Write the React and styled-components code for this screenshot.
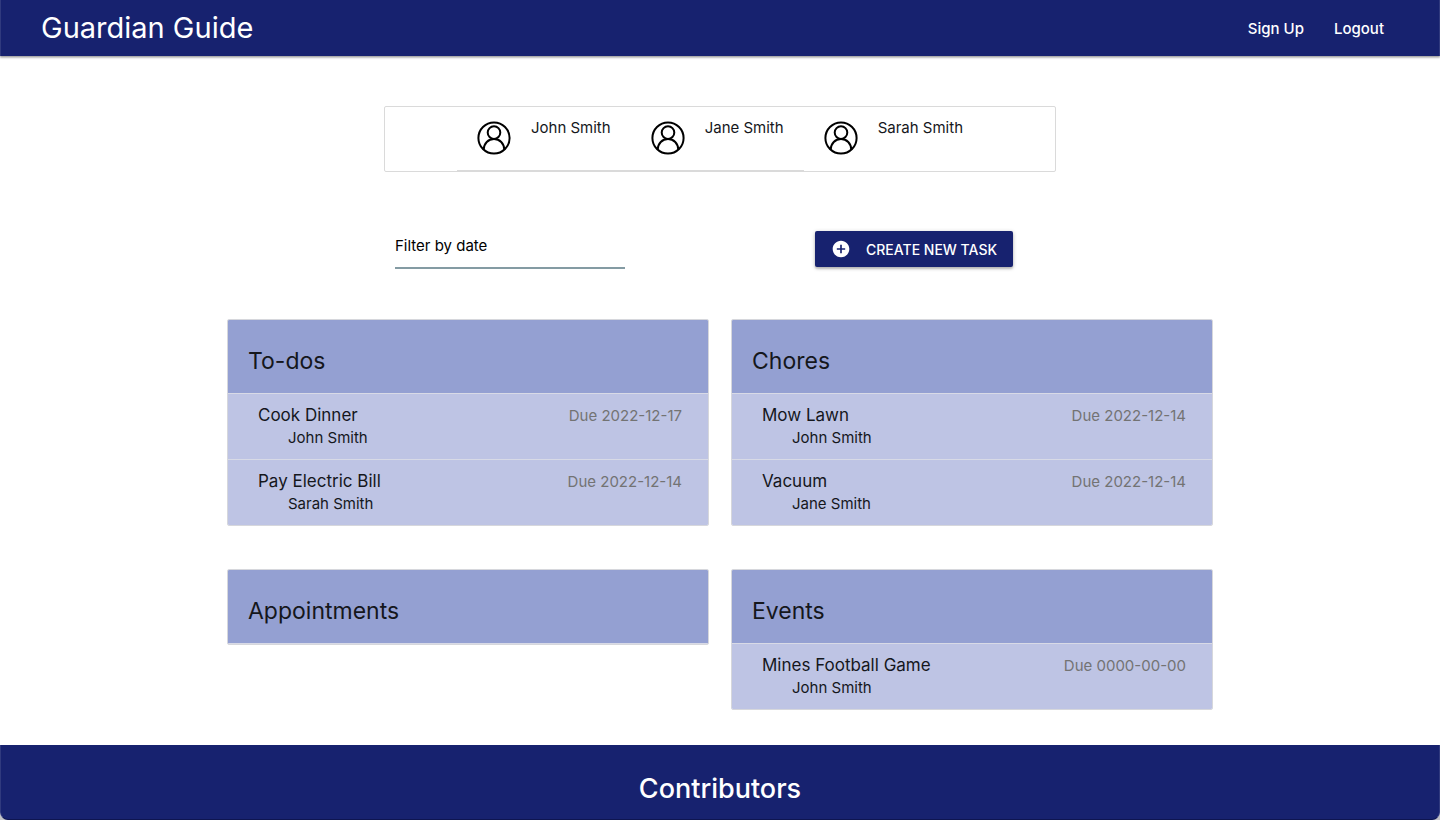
import React from "react";
import styled, { createGlobalStyle } from "styled-components";

const GlobalStyle = createGlobalStyle`
  *, *::before, *::after { box-sizing: border-box; }
  html { background: #c4c4c8; }
  body {
    margin: 0;
    font-family: Inter, "Liberation Sans", sans-serif;
    font-size: 15px;
    line-height: 22px;
    color: #15171c;
  }
  h1, h2, h3, p, ul { margin: 0; padding: 0; font-weight: 400; }
  ul { list-style: none; }
`;

const Page = styled.div`
  display: flex;
  flex-direction: column;
  min-height: 100vh;
  background: #fff;
  border-radius: 0 0 8px 8px;
`;

const NavBar = styled.header`
  display: flex;
  align-items: center;
  justify-content: space-between;
  height: 56px;
  padding: 0 40px;
  background: #17226f;
  border: solid #303a7e;
  border-width: 0 1px;
  box-shadow: 0 2px 2px rgba(0, 0, 0, 0.16), 0 1px 2px rgba(0, 0, 0, 0.3);
`;

const Brand = styled.a`
  font-size: 29px;
  line-height: 56px;
  color: #fff;
  text-decoration: none;
`;

const NavLinks = styled.nav`
  display: flex;
  padding-top: 2px;
`;

const NavLink = styled.a`
  padding: 0 15px;
  font-size: 15px;
  line-height: 54px;
  font-weight: 500;
  color: #fff;
  text-decoration: none;
`;

const Main = styled.main`
  flex: 1;
  width: 70%;
  margin: 0 auto;
  padding: 50px 0 35px;
`;

const People = styled.ul`
  display: flex;
  justify-content: center;
  width: 66.6667%;
  margin: 0 auto;
  border: 1px solid #dadada;
  border-radius: 2px;
`;

const Person = styled.li`
  display: flex;
  gap: 20px;
  height: 64px;
  padding: 10px 20px;
  border-bottom: 1px solid #dadada;

  &:last-child { border-bottom-color: transparent; }

  svg { margin-top: 4px; }
`;

const Toolbar = styled.div`
  display: grid;
  grid-template-columns: repeat(12, 1fr);
  margin-top: 52px;
  margin-bottom: 50px;
`;

const FilterField = styled.div`
  grid-column: 3 / span 3;
  padding: 0 11px;
`;

const FilterInput = styled.input`
  display: block;
  width: 100%;
  height: 45px;
  padding: 0;
  border: 0;
  border-bottom: 2px solid #849ba3;
  background: transparent;
  font: inherit;
  color: #000;
  outline: none;

  &::placeholder { color: #000; opacity: 1; }
`;

const CreateCell = styled.div`
  grid-column: 8 / span 4;
  padding: 7px 11px 0;
`;

const CreateButton = styled.button`
  display: flex;
  align-items: center;
  gap: 15px;
  height: 36px;
  padding: 0 16px;
  border: 0;
  border-radius: 2px;
  background: #17226f;
  color: #fff;
  font-family: inherit;
  font-size: 14px;
  font-weight: 500;
  text-transform: uppercase;
  white-space: nowrap;
  cursor: pointer;
  box-shadow: 0 2px 2px rgba(0, 0, 0, 0.16), 0 1px 4px rgba(0, 0, 0, 0.24);
`;

const Board = styled.div`
  display: grid;
  grid-template-columns: 1fr 1fr;
  align-items: start;
  gap: 43px 22px;
  padding: 0 11px;
`;

const Card = styled.section`
  border: 1px solid #d6d7dc;
  border-radius: 2px;
  overflow: hidden;
`;

const CardHeader = styled.div`
  height: 74px;
  padding: 24px 20px 0;
  background: #94a0d2;
  border-bottom: 1px solid #d8dae6;
`;

const CardTitle = styled.h2`
  font-size: 23px;
  line-height: 34px;
`;

const Task = styled.li`
  display: flex;
  justify-content: space-between;
  height: 66px;
  padding: 10px 26px 0 30px;
  background: #bec4e4;
  border-bottom: 1px solid #d8dae6;

  &:last-child { height: 65px; border-bottom: 0; }
`;

const TaskName = styled.h3`
  font-size: 17px;
  line-height: 22px;
`;

const Assignee = styled.p`
  padding-left: 30px;
  line-height: 24px;
`;

const DueDate = styled.span`
  line-height: 24px;
  color: #737373;
`;

const Footer = styled.footer`
  height: 75px;
  padding-top: 24px;
  background: #17226f;
  border: solid #303a7e;
  border-width: 0 1px;
  border-bottom: 1px solid #0e1550;
  border-radius: 0 0 8px 8px;
  text-align: center;
`;

const FooterTitle = styled.h2`
  font-size: 27px;
  line-height: 40px;
  font-weight: 500;
  color: #fff;
`;

const PersonIcon = () => (
  <svg width="34" height="34" viewBox="0 0 34 34" fill="none" stroke="#000" strokeWidth="2" aria-hidden="true">
    <circle cx="17" cy="17" r="15.6" />
    <circle cx="17" cy="11.6" r="6.3" />
    <path d="M6.7 28.6C6.9 22.5 11.2 18 17 18s10.1 4.500 10.300 10.600" />
  </svg>
);

const AddIcon = () => (
  <svg width="20" height="20" viewBox="0 0 24 24" aria-hidden="true">
    <path
      fill="#fff"
      d="M12 2C6.480 2 2 6.480 2 12s4.480 10 10 10 10-4.480 10-10S17.520 2 12 2zm5 11h-4v4h-2v-4H7v-2h4V7h2v4h4v2z"
    />
  </svg>
);

const people = ["John Smith", "Jane Smith", "Sarah Smith"];

const lists = [
  {
    title: "To-dos",
    tasks: [
      { name: "Cook Dinner", who: "John Smith", due: "2022-12-17" },
      { name: "Pay Electric Bill", who: "Sarah Smith", due: "2022-12-14" },
    ],
  },
  {
    title: "Chores",
    tasks: [
      { name: "Mow Lawn", who: "John Smith", due: "2022-12-14" },
      { name: "Vacuum", who: "Jane Smith", due: "2022-12-14" },
    ],
  },
  { title: "Appointments", tasks: [] },
  {
    title: "Events",
    tasks: [{ name: "Mines Football Game", who: "John Smith", due: "0000-00-00" }],
  },
];

export default function App() {
  return (
    <Page>
      <GlobalStyle />
      <NavBar>
        <Brand href="#home">Guardian Guide</Brand>
        <NavLinks>
          <NavLink href="#signup">Sign Up</NavLink>
          <NavLink href="#logout">Logout</NavLink>
        </NavLinks>
      </NavBar>
      <Main>
        <People>
          {people.map((name) => (
            <Person key={name}>
              <PersonIcon />
              {name}
            </Person>
          ))}
        </People>
        <Toolbar>
          <FilterField>
            <FilterInput type="text" placeholder="Filter by date" aria-label="Filter by date" />
          </FilterField>
          <CreateCell>
            <CreateButton type="button">
              <AddIcon />
              Create new task
            </CreateButton>
          </CreateCell>
        </Toolbar>
        <Board>
          {lists.map((list) => (
            <Card key={list.title}>
              <CardHeader>
                <CardTitle>{list.title}</CardTitle>
              </CardHeader>
              <ul>
                {list.tasks.map((task) => (
                  <Task key={task.name}>
                    <div>
                      <TaskName>{task.name}</TaskName>
                      <Assignee>{task.who}</Assignee>
                    </div>
                    <DueDate>Due {task.due}</DueDate>
                  </Task>
                ))}
              </ul>
            </Card>
          ))}
        </Board>
      </Main>
      <Footer>
        <FooterTitle>Contributors</FooterTitle>
      </Footer>
    </Page>
  );
}
